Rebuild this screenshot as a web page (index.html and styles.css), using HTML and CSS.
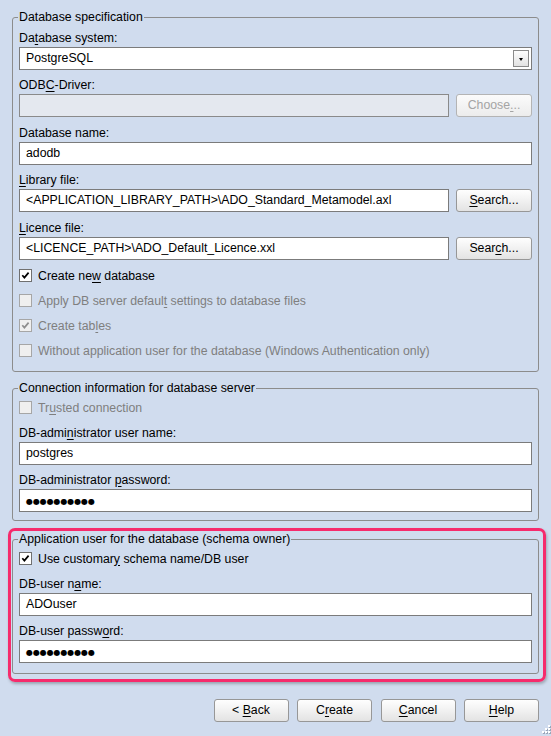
FILE: index.html
```html
<!DOCTYPE html>
<html>
<head>
<meta charset="utf-8">
<title>Database</title>
<link rel="stylesheet" href="styles.css">
</head>
<body>
<div class="dialog">
  <fieldset class="group">
    <legend>Database specification</legend>
    <div class="lbl">Da<u>t</u>abase system:</div>
    <div class="select"><span>PostgreSQL</span><span class="dd"><span class="tri"></span></span></div>
    <div class="lbl">ODB<u>C</u>-Driver:</div>
    <div class="row2"><div class="input disabled"></div><div class="btn disabled">Choose<u>.</u>..</div></div>
    <div class="lbl">Database name:</div>
    <div class="input">adodb</div>
    <div class="lbl"><u>L</u>ibrary file:</div>
    <div class="row2"><div class="input">&lt;APPLICATION_LIBRARY_PATH&gt;\ADO_Standard_Metamodel.axl</div><div class="btn"><u>S</u>earch...</div></div>
    <div class="lbl"><u>L</u>icence file:</div>
    <div class="row2"><div class="input">&lt;LICENCE_PATH&gt;\ADO_Default_Licence.xxl</div><div class="btn">Sear<u>c</u>h...</div></div>
    <div class="checks">
      <div class="chk"><span class="cb"><svg viewBox="0 0 11 11"><path d="M2.3 5.2 4.4 7.6 8.6 2.6"/></svg></span><span>Create ne<u>w</u> database</span></div>
      <div class="chk off"><span class="cb"></span><span>Apply DB server defaul<u>t</u> settings to database files</span></div>
      <div class="chk off"><span class="cb"><svg viewBox="0 0 11 11"><path d="M2.3 5.2 4.4 7.6 8.6 2.6"/></svg></span><span>Create tab<u>l</u>es</span></div>
      <div class="chk off"><span class="cb"></span><span>Without application user for the database (Windows Authentication only)</span></div>
    </div>
  </fieldset>

  <fieldset class="group g2">
    <legend>Connection information for database server</legend>
    <div class="chk off"><span class="cb"></span><span>Tr<u>u</u>sted connection</span></div>
    <div class="lbl">DB-admi<u>n</u>istrator user name:</div>
    <div class="input">postgres</div>
    <div class="lbl">DB-administrator <u>p</u>assword:</div>
    <div class="input"><span class="pw">●●●●●●●●●●</span></div>
  </fieldset>

  <div class="highlight">
    <fieldset class="group g3">
      <legend>Application user for the database (schema owner)</legend>
      <div class="chk"><span class="cb"><svg viewBox="0 0 11 11"><path d="M2.3 5.2 4.4 7.6 8.6 2.6"/></svg></span><span>Use customar<u>y</u> schema name/DB user</span></div>
      <div class="lbl">DB-user n<u>a</u>me:</div>
      <div class="input">ADOuser</div>
      <div class="lbl">DB-user passw<u>o</u>rd:</div>
      <div class="input"><span class="pw">●●●●●●●●●●</span></div>
    </fieldset>
  </div>

  <div class="buttons">
    <div class="btn">&lt; <u>B</u>ack</div>
    <div class="btn">C<u>r</u>eate</div>
    <div class="btn"><u>C</u>ancel</div>
    <div class="btn"><u>H</u>elp</div>
  </div>
</div>
<svg class="grip" viewBox="0 0 12 12" width="12" height="12">
  <g fill="#9aa6b8"><rect x="10" y="2" width="2" height="2"/><rect x="7" y="5" width="2" height="2"/><rect x="10" y="5" width="2" height="2"/><rect x="4" y="8" width="2" height="2"/><rect x="7" y="8" width="2" height="2"/><rect x="10" y="8" width="2" height="2"/></g>
  <g fill="#ffffff"><rect x="9" y="1" width="2" height="2"/><rect x="6" y="4" width="2" height="2"/><rect x="9" y="4" width="2" height="2"/><rect x="3" y="7" width="2" height="2"/><rect x="6" y="7" width="2" height="2"/><rect x="9" y="7" width="2" height="2"/></g>
</svg>
</body>
</html>
```

FILE: styles.css
```css
html, body {
  margin: 0;
  padding: 0;
  background: #d0dcee;
}
body {
  font-family: "Liberation Sans", Arial, sans-serif;
  font-size: 12.3px;
  color: #000;
  width: 551px;
  height: 736px;
  position: relative;
  overflow: hidden;
}
u { text-decoration: underline; text-underline-offset: 2px; }

.dialog {
  padding: 10px 12px 0;
}

.group {
  margin: 0;
  min-width: 0;
  border: 1px solid #8c8c8c;
  border-radius: 3px;
  padding: 0 6px 8px;
}
.group legend {
  padding: 0 1px;
  margin-left: -1px;
  line-height: 14px;
  font-size: 12.3px;
  color: #000;
}
.g2 { margin-top: 9px; }
.g3 { padding-bottom: 10px; }

.lbl {
  height: 16px;
  line-height: 16px;
  margin-top: 7.5px;
  margin-bottom: 1px;
  white-space: nowrap;
}
legend + .lbl { margin-top: 5.5px; }
.chk + .lbl { margin-top: 4.5px; }

.input, .select {
  box-sizing: border-box;
  height: 23px;
  border: 1px solid #7b7b7b;
  background: #fff;
  line-height: 21px;
  padding: 0 6px;
  white-space: nowrap;
  overflow: hidden;
}
.input.disabled {
  background: #e4e8ef;
  border-color: #8a8a8a;
}
.select {
  display: flex;
  align-items: center;
  justify-content: space-between;
  padding-right: 2px;
}
.dd {
  box-sizing: border-box;
  width: 16px;
  height: 17px;
  border: 1px solid #8a8a8a;
  background: linear-gradient(#fdfdfd, #e2e2e2);
  display: flex;
  align-items: center;
  justify-content: center;
}
.tri {
  width: 0;
  height: 0;
  border-left: 2.5px solid transparent;
  border-right: 2.5px solid transparent;
  border-top: 3px solid #000;
  margin-top: 2px;
}

.row2 {
  display: grid;
  grid-template-columns: 1fr 76px;
  column-gap: 7px;
}

.btn {
  box-sizing: border-box;
  height: 23px;
  border: 1px solid #979797;
  border-radius: 3px;
  background: linear-gradient(#fefefe 0%, #f1f1f1 50%, #e3e3e3 100%);
  text-align: center;
  line-height: 21px;
  white-space: nowrap;
}
.btn.disabled {
  color: #a4a4a4;
  border-color: #b4b4b4;
  background: linear-gradient(#fbfbfb, #ececec);
}

.checks { margin-top: 3.5px; }
.chk {
  height: 25px;
  display: flex;
  align-items: center;
  gap: 6px;
  white-space: nowrap;
}
.cb {
  box-sizing: border-box;
  width: 13px;
  height: 13px;
  border: 1px solid #707070;
  background: #fff;
  display: flex;
}
.cb svg { width: 11px; height: 11px; }
.cb path {
  fill: none;
  stroke: #000;
  stroke-width: 1.7;
}
.chk.off { color: #7f7f7f; }
.chk.off .cb {
  background: #efefef;
  border-color: #a6a6a6;
}
.chk.off .cb path { stroke: #8d8d8d; }

.pw {
  font-family: "DejaVu Sans", sans-serif;
  font-size: 8px;
  letter-spacing: -0.1px;
  color: #000;
}

.highlight {
  margin: 7px -7px 0 -4px;
  border: 3px solid #f62b6c;
  border-radius: 7px;
  padding: 1px 4px 5px 1px;
  box-shadow: 1px 2px 3px rgba(0, 0, 0, 0.25);
}

.buttons {
  display: flex;
  justify-content: flex-end;
  gap: 8.5px;
  margin-top: 17px;
}
.buttons .btn { width: 75px; }

.grip {
  position: absolute;
  right: 0;
  bottom: 0;
}
```
